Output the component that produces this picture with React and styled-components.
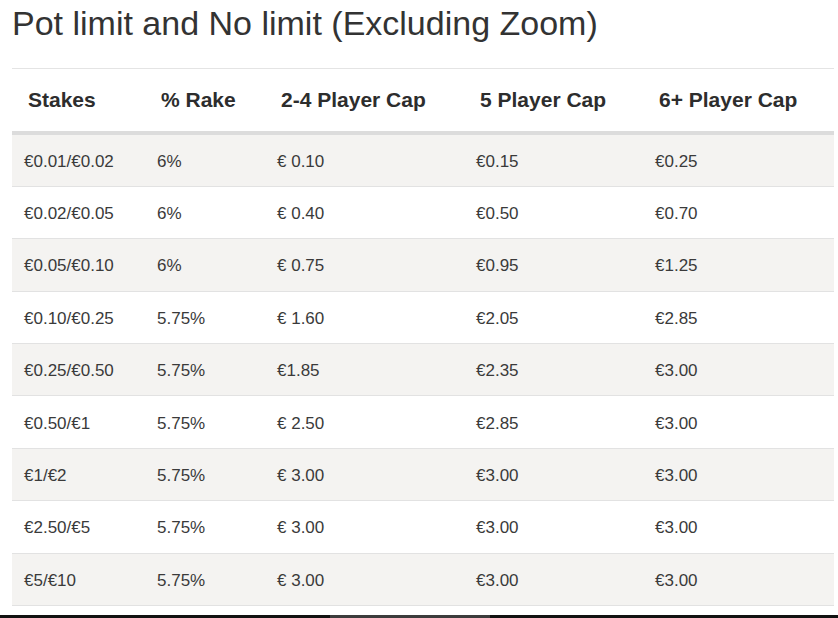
import React from "react";
import styled, { createGlobalStyle } from "styled-components";

const Global = createGlobalStyle`
  html, body { margin: 0; padding: 0; background: #fff; }
  body { font-family: "Liberation Sans", Arial, sans-serif; width: 838px; height: 618px; overflow: hidden; }
`;

const Page = styled.div`
  display: flex;
  flex-direction: column;
  width: 838px;
`;

const Content = styled.div`
  padding: 0 4px 0 12px;
`;

const Title = styled.h1`
  margin: 0;
  padding-top: 4px;
  font-size: 34px;
  line-height: 38px;
  font-weight: 400;
  color: #333;
  height: 64px;
`;

const Table = styled.table`
  width: 822px;
  border-collapse: collapse;
  table-layout: fixed;
  border-top: 1px solid #e4e4e4;
`;

const Th = styled.th`
  text-align: left;
  font-size: 21px;
  font-weight: 700;
  color: #2d2d2d;
  padding: 1px 0 0 16px;
  height: 64px;
  border-bottom: 4px solid #dcdcdc;
  box-sizing: border-box;
  vertical-align: middle;
`;

const Row = styled.tr`
  background: ${(p) => (p.$shade ? "#f4f3f1" : "#ffffff")};
  border-bottom: 1px solid #e2e2e2;
`;

const Td = styled.td`
  font-size: 17px;
  color: #3a3a3a;
  padding: 3px 0 0 12px;
  height: 48.375px;
  vertical-align: middle;
`;

const ScrollBar = styled.div`
  margin-top: 9px;
  height: 3px;
  width: 838px;
  background: linear-gradient(
    to right,
    #111 0,
    #111 330px,
    #3c3c3c 330px,
    #3c3c3c 490px,
    #111 490px,
    #111 100%
  );
`;

const widths = [133, 120, 199, 179, 191];
const heads = ["Stakes", "% Rake", "2-4 Player Cap", "5 Player Cap", "6+ Player Cap"];
const rows = [
  ["€0.01/€0.02", "6%", "€ 0.10", "€0.15", "€0.25"],
  ["€0.02/€0.05", "6%", "€ 0.40", "€0.50", "€0.70"],
  ["€0.05/€0.10", "6%", "€ 0.75", "€0.95", "€1.25"],
  ["€0.10/€0.25", "5.75%", "€ 1.60", "€2.05", "€2.85"],
  ["€0.25/€0.50", "5.75%", "€1.85", "€2.35", "€3.00"],
  ["€0.50/€1", "5.75%", "€ 2.50", "€2.85", "€3.00"],
  ["€1/€2", "5.75%", "€ 3.00", "€3.00", "€3.00"],
  ["€2.50/€5", "5.75%", "€ 3.00", "€3.00", "€3.00"],
  ["€5/€10", "5.75%", "€ 3.00", "€3.00", "€3.00"],
];

export default function App() {
  return (
    <Page>
      <Global />
      <Content>
        <Title>Pot limit and No limit (Excluding Zoom)</Title>
        <Table>
          <colgroup>
            {widths.map((w, i) => (
              <col key={i} style={{ width: w }} />
            ))}
          </colgroup>
          <thead>
            <tr>
              {heads.map((h) => (
                <Th key={h}>{h}</Th>
              ))}
            </tr>
          </thead>
          <tbody>
            {rows.map((r, i) => (
              <Row key={i} $shade={i % 2 === 0}>
                {r.map((c, j) => (
                  <Td key={j}>{c}</Td>
                ))}
              </Row>
            ))}
          </tbody>
        </Table>
      </Content>
      <ScrollBar />
    </Page>
  );
}
